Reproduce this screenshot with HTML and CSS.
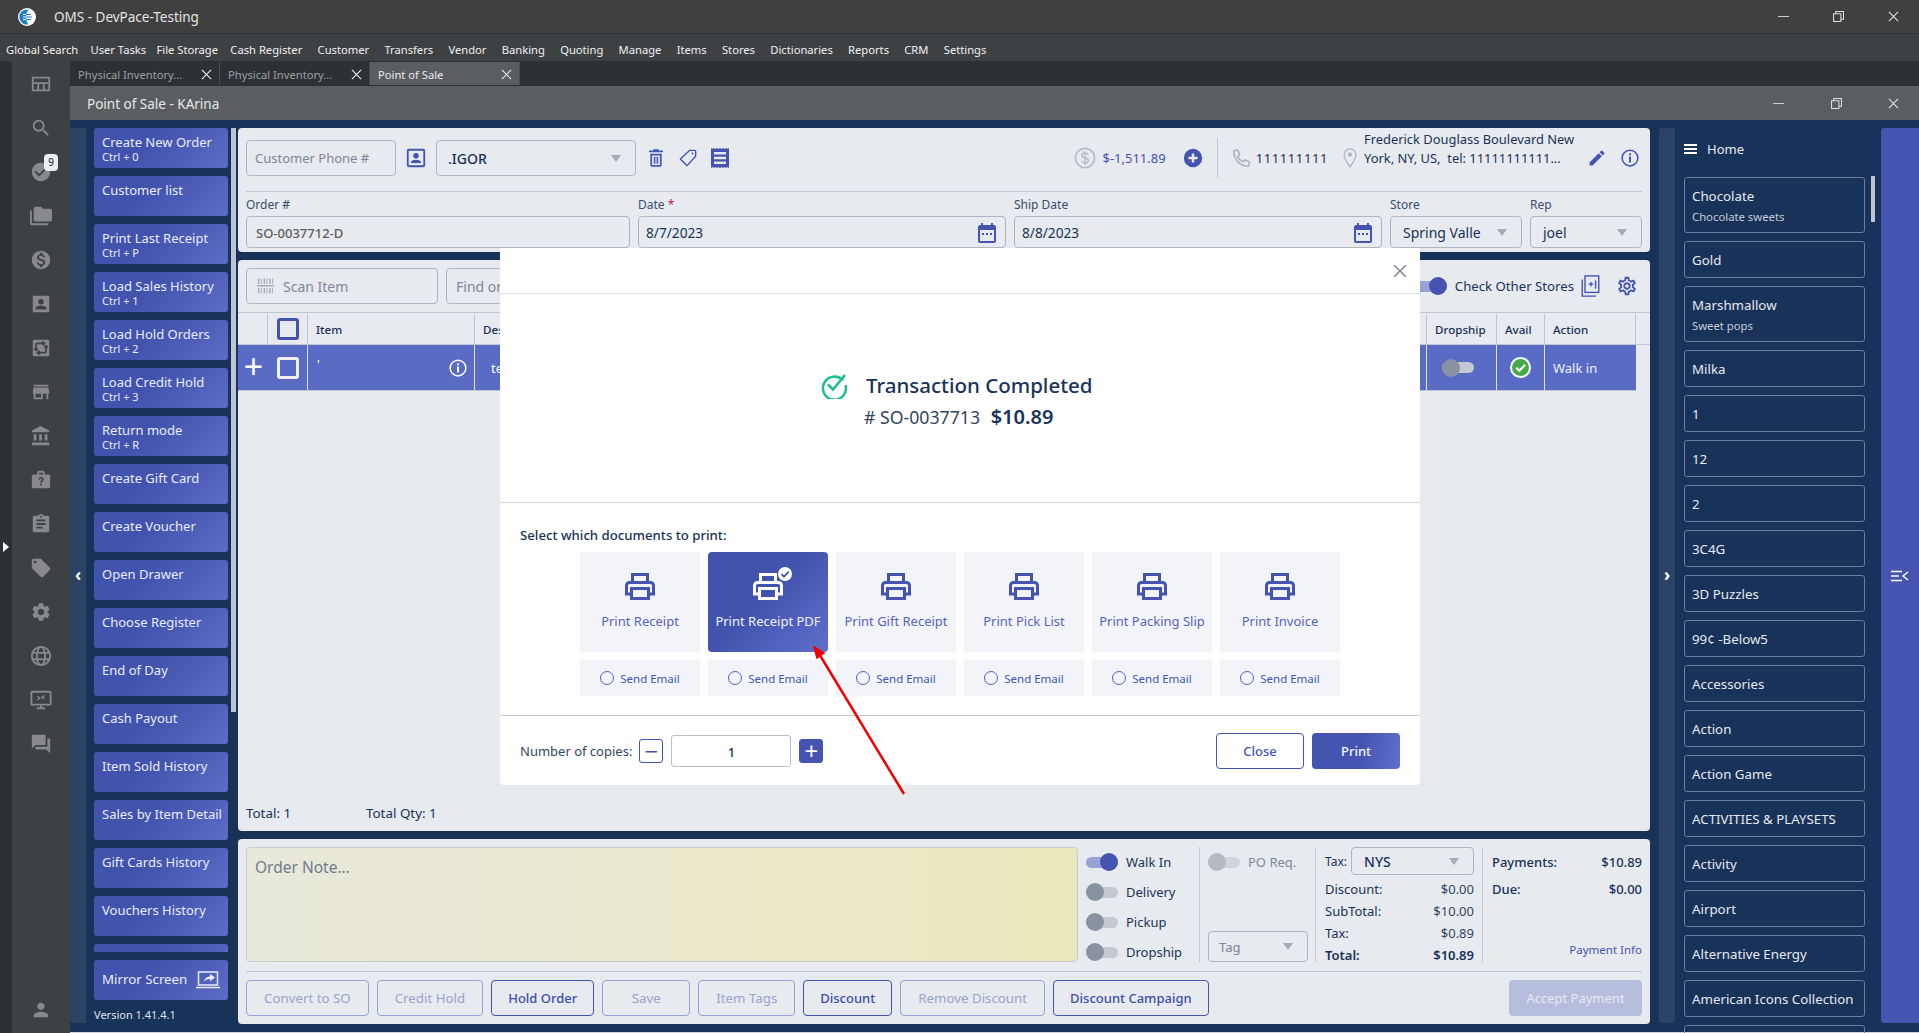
FILE: index.html
```html
<!DOCTYPE html>
<html lang="en">
<head>
<meta charset="utf-8">
<title>OMS - DevPace-Testing</title>
<link rel="stylesheet" href="styles.css">
</head>
<body>
<svg class="sprite" xmlns="http://www.w3.org/2000/svg">
  <symbol id="i-quilt" viewBox="0 0 24 24"><path fill="none" stroke="currentColor" stroke-width="2" d="M3 5h18v14H3zM3 11h18M9 11v8M15 11v8"/></symbol>
  <symbol id="i-search" viewBox="0 0 24 24"><path d="M15.5 14h-.79l-.28-.27A6.471 6.471 0 0 0 16 9.5 6.5 6.5 0 1 0 9.5 16c1.61 0 3.09-.59 4.23-1.57l.27.28v.79l5 4.99L20.49 19l-4.99-5zm-6 0C7.01 14 5 11.99 5 9.5S7.01 5 9.5 5 14 7.01 14 9.5 11.99 14 9.5 14z"/></symbol>
  <symbol id="i-check-circle" viewBox="0 0 24 24"><path d="M12 2C6.48 2 2 6.48 2 12s4.48 10 10 10 10-4.48 10-10S17.52 2 12 2zm-2 15l-5-5 1.41-1.41L10 14.17l7.59-7.59L19 8l-9 9z"/></symbol>
  <symbol id="i-folders" viewBox="0 0 24 24"><path d="M2 6H0v14c0 1.1.9 2 2 2h18v-2H2V6zm20-2h-8l-2-2H6c-1.1 0-1.99.9-1.99 2L4 16c0 1.1.9 2 2 2h16c1.1 0 2-.9 2-2V6c0-1.1-.9-2-2-2z"/></symbol>
  <symbol id="i-dollar" viewBox="0 0 24 24"><path d="M12 2C6.48 2 2 6.48 2 12s4.48 10 10 10 10-4.48 10-10S17.52 2 12 2zm1.41 16.09V20h-2.67v-1.93c-1.71-.36-3.16-1.46-3.27-3.4h1.96c.1 1.05.82 1.87 2.65 1.87 1.96 0 2.4-.98 2.4-1.59 0-.83-.44-1.61-2.67-2.14-2.48-.6-4.18-1.62-4.18-3.67 0-1.72 1.39-2.84 3.11-3.21V4h2.67v1.95c1.86.45 2.79 1.86 2.85 3.39H14.3c-.05-1.11-.64-1.87-2.22-1.87-1.5 0-2.4.68-2.4 1.64 0 .84.65 1.39 2.67 1.91s4.18 1.39 4.18 3.91c-.01 1.83-1.38 2.83-3.12 3.16z"/></symbol>
  <symbol id="i-portrait" viewBox="0 0 24 24"><path fill-rule="evenodd" d="M4 3h16a1 1 0 0 1 1 1v16a1 1 0 0 1-1 1H4a1 1 0 0 1-1-1V4a1 1 0 0 1 1-1zm8 3.500a3 3 0 1 0 0 6 3 3 0 0 0 0-6zM6 18h12v-1.300c0-2-4-3-6-3s-6 1-6 3z"/></symbol>
  <symbol id="i-portrait-line" viewBox="0 0 24 24"><path fill-rule="evenodd" d="M4 2h16a2 2 0 0 1 2 2v16a2 2 0 0 1-2 2H4a2 2 0 0 1-2-2V4a2 2 0 0 1 2-2zm0 2v16h16V4zm8 2.500a3 3 0 1 1 0 6 3 3 0 0 1 0-6zM6.500 17.500v-.8c0-1.800 3.500-2.700 5.500-2.700s5.500.9 5.500 2.700v.8z"/></symbol>
  <symbol id="i-swap" viewBox="0 0 24 24"><rect x="3" y="3" width="18" height="18" rx="1.500"/><g fill="none" stroke="#3e4144" stroke-width="1.800"><path d="M6.500 13V8.500a1.500 1.500 0 0 1 1.500-1.500h7"/><path d="M17.500 11v4.500a1.500 1.500 0 0 1-1.500 1.500H9"/><path d="M13.500 4.800l2.500 2.200-2.500 2.200M10.500 14.800L8 17l2.500 2.200M4.500 12.500l2 2 2-2M15.500 11.500l2-2 2 2"/></g></symbol>
  <symbol id="i-store" viewBox="0 0 24 24"><path d="M20 4H4v2h16V4zm1 10v-2l-1-5H4l-1 5v2h1v6h10v-6h4v6h2v-6h1zm-9 4H6v-4h6v4z"/></symbol>
  <symbol id="i-bank" viewBox="0 0 24 24"><path d="M4 10v7h3v-7H4zm6 0v7h3v-7h-3zM2 22h19v-3H2v3zm14-12v7h3v-7h-3zm-4.500-9L2 6v2h19V6l-9.500-5z"/></symbol>
  <symbol id="i-case" viewBox="0 0 24 24"><path fill-rule="evenodd" d="M4 6h4V4a2 2 0 0 1 2-2h4a2 2 0 0 1 2 2v2h4a2 2 0 0 1 2 2v11a2 2 0 0 1-2 2H4a2 2 0 0 1-2-2V8a2 2 0 0 1 2-2zm6-2v2h4V4zm1 14h2v-2h-2zm1-9c-2 0-3 1.200-3 2.500h2c0-.6.400-1 1-1s1 .4 1 1c0 1.200-2 1-2 3.500h2c0-1.800 2-2 2-3.500C15 10.200 14 9 12 9z"/></symbol>
  <symbol id="i-clipboard" viewBox="0 0 24 24"><path d="M19 3h-4.180C14.400 1.840 13.300 1 12 1c-1.300 0-2.400.84-2.820 2H5c-1.100 0-2 .9-2 2v14c0 1.100.9 2 2 2h14c1.100 0 2-.9 2-2V5c0-1.100-.9-2-2-2zm-7 0c.55 0 1 .45 1 1s-.45 1-1 1-1-.45-1-1 .45-1 1-1zm2 14H7v-2h7v2zm3-4H7v-2h10v2zm0-4H7V7h10v2z"/></symbol>
  <symbol id="i-tag" viewBox="0 0 24 24"><path d="M21.410 11.580l-9-9C12.050 2.220 11.550 2 11 2H4c-1.100 0-2 .9-2 2v7c0 .55.22 1.050.59 1.420l9 9c.36.36.86.58 1.410.58.55 0 1.050-.22 1.410-.59l7-7c.37-.36.59-.86.59-1.410 0-.55-.23-1.060-.59-1.420zM5.500 7C4.670 7 4 6.330 4 5.500S4.670 4 5.500 4 7 4.670 7 5.500 6.330 7 5.500 7z"/></symbol>
  <symbol id="i-gear" viewBox="0 0 24 24"><path d="M19.140 12.940c.04-.3.06-.61.06-.94 0-.32-.02-.64-.07-.94l2.030-1.580a.49.49 0 0 0 .12-.61l-1.920-3.320a.488.488 0 0 0-.59-.22l-2.390.96c-.5-.38-1.030-.7-1.620-.94l-.36-2.540a.484.484 0 0 0-.48-.41h-3.840c-.24 0-.43.17-.47.41l-.36 2.540c-.59.24-1.130.57-1.620.94l-2.390-.96c-.22-.08-.47 0-.59.22L2.740 8.870c-.12.21-.08.47.12.61l2.030 1.580c-.05.3-.09.63-.09.94s.02.64.07.94l-2.030 1.580a.49.49 0 0 0-.12.61l1.920 3.320c.12.22.37.29.59.22l2.390-.96c.5.38 1.030.7 1.620.94l.36 2.540c.05.24.24.41.48.41h3.840c.24 0 .44-.17.47-.41l.36-2.540c.59-.24 1.130-.56 1.620-.94l2.390.96c.22.08.47 0 .59-.22l1.920-3.320c.12-.22.07-.47-.12-.61l-2.010-1.580zM12 15.600c-1.980 0-3.600-1.620-3.600-3.600s1.620-3.600 3.600-3.600 3.600 1.620 3.600 3.600-1.620 3.600-3.600 3.600z"/></symbol>
  <symbol id="i-gear-line" viewBox="0 0 24 24"><path d="M19.430 12.980c.04-.32.07-.64.07-.98 0-.34-.03-.66-.07-.98l2.110-1.650c.19-.15.24-.42.12-.64l-2-3.460a.5.5 0 0 0-.61-.22l-2.490 1c-.52-.4-1.080-.73-1.690-.98l-.38-2.650A.488.488 0 0 0 14 2h-4c-.25 0-.46.18-.49.42l-.38 2.650c-.61.25-1.170.59-1.690.98l-2.490-1a.566.566 0 0 0-.18-.03c-.17 0-.34.09-.43.25l-2 3.460c-.13.22-.07.49.12.64l2.110 1.650c-.04.32-.07.65-.07.98 0 .33.03.66.07.98l-2.110 1.650c-.19.15-.24.42-.12.64l2 3.460a.5.5 0 0 0 .61.22l2.490-1c.52.4 1.080.73 1.690.98l.38 2.650c.03.24.24.42.49.42h4c.25 0 .46-.18.49-.42l.38-2.650c.61-.25 1.170-.59 1.690-.98l2.490 1c.06.02.12.03.18.03.17 0 .34-.09.43-.25l2-3.460c.12-.22.07-.49-.12-.64l-2.110-1.650zm-1.980-1.710c.04.31.05.52.05.73 0 .21-.02.43-.05.73l-.14 1.130.89.7 1.080.84-.7 1.210-1.270-.51-1.040-.42-.9.68c-.43.32-.84.56-1.250.73l-1.060.43-.16 1.130-.2 1.350h-1.400l-.19-1.350-.16-1.130-1.060-.43c-.43-.18-.83-.41-1.230-.71l-.91-.7-1.060.43-1.270.51-.7-1.210 1.080-.84.89-.7-.14-1.130c-.03-.31-.05-.54-.05-.74s.02-.43.05-.73l.14-1.130-.89-.7-1.080-.84.7-1.210 1.270.51 1.040.42.9-.68c.43-.32.84-.56 1.250-.73l1.060-.43.16-1.130.2-1.350h1.390l.19 1.350.16 1.130 1.060.43c.43.18.83.41 1.230.71l.91.7 1.060-.43 1.270-.51.7 1.210-1.070.85-.89.7.14 1.130zM12 8c-2.210 0-4 1.790-4 4s1.790 4 4 4 4-1.790 4-4-1.790-4-4-4zm0 6c-1.100 0-2-.9-2-2s.9-2 2-2 2 .9 2 2-.9 2-2 2z"/></symbol>
  <symbol id="i-globe" viewBox="0 0 24 24"><g fill="none" stroke="currentColor" stroke-width="2"><circle cx="12" cy="12" r="10"/><ellipse cx="12" cy="12" rx="4.500" ry="10"/><path d="M3 8.500h18M3 15.500h18"/></g></symbol>
  <symbol id="i-monitor" viewBox="0 0 24 24"><g fill="none" stroke="currentColor" stroke-width="2"><rect x="1.500" y="3" width="21" height="14" rx="1"/><path d="M12 17v4M7.500 21h9"/><path stroke-width="1.300" d="M8 8l3 2-3 2M16 7l-3 2 3 2"/></g></symbol>
  <symbol id="i-forum" viewBox="0 0 24 24"><path d="M21 6h-2v9H6v2c0 .55.45 1 1 1h11l4 4V7c0-.55-.45-1-1-1zm-4 6V3c0-.55-.45-1-1-1H3c-.55 0-1 .45-1 1v14l4-4h10c.55 0 1-.45 1-1z"/></symbol>
  <symbol id="i-person" viewBox="0 0 24 24"><path d="M12 12c2.210 0 4-1.790 4-4s-1.790-4-4-4-4 1.790-4 4 1.790 4 4 4zm0 2c-2.670 0-8 1.340-8 4v2h16v-2c0-2.660-5.330-4-8-4z"/></symbol>
  <symbol id="i-trash" viewBox="0 0 16 20"><path fill-rule="evenodd" d="M5 0h6v1.500h5V3.500H0V1.500h5zM1.500 5h13v13a2 2 0 0 1-2 2h-9a2 2 0 0 1-2-2zm2 2v11h9V7zm2 1.500h1.800v8H5.500zm3.200 0h1.800v8H8.700z"/></symbol>
  <symbol id="i-tag-line" viewBox="0 0 20 20"><path fill="none" stroke="currentColor" stroke-width="1.500" stroke-linejoin="round" d="M12 1.500h5.500a1 1 0 0 1 1 1V8L9 18.500 1.500 11z"/><circle cx="15" cy="5" r="1"/></symbol>
  <symbol id="i-receipt" viewBox="0 0 18 20"><path fill-rule="evenodd" d="M0 0l1.500 1L3 0l1.500 1L6 0l1.500 1L9 0l1.500 1L12 0l1.500 1L15 0l1.500 1L18 0v20l-1.500-1-1.500 1-1.500-1-1.500 1-1.500-1L9 20l-1.500-1L6 20l-1.500-1L3 20l-1.500-1L0 20zM3 4v2.500h12V4zm0 4.700v2.500h12V8.700zm0 4.700v2.500h12v-2.500z"/></symbol>
  <symbol id="i-calendar" viewBox="0 0 18 20"><path fill-rule="evenodd" d="M3 0h2v2h8V0h2v2h1a2 2 0 0 1 2 2v14a2 2 0 0 1-2 2H2a2 2 0 0 1-2-2V4a2 2 0 0 1 2-2h1zM2 7v11h14V7zm2 3h2v2H4zm4 0h2v2H8zm4 0h2v2h-2z"/></symbol>
  <symbol id="i-phone" viewBox="0 0 20 20"><path fill="none" stroke="currentColor" stroke-width="1.800" stroke-linejoin="round" d="M2 2l4-1 2 5-2 2c1 2.500 3 4.500 5.500 5.500l2-2 5 2-1 4.500C9 18.500 1.500 11 2 2z"/></symbol>
  <symbol id="i-pin" viewBox="0 0 16 24"><path fill="none" stroke="currentColor" stroke-width="1.500" d="M8 23C5 18 1 13.500 1 8a7 7 0 0 1 14 0c0 5.500-4 10-7 15z"/><circle cx="8" cy="8" r="2.500"/></symbol>
  <symbol id="i-pencil" viewBox="0 0 24 24"><path d="M3 17.250V21h3.750L17.810 9.940l-3.750-3.750L3 17.250zM20.710 7.040c.39-.39.39-1.020 0-1.410l-2.340-2.340a.996.996 0 0 0-1.410 0l-1.830 1.830 3.750 3.750 1.830-1.830z"/></symbol>
  <symbol id="i-info" viewBox="0 0 24 24"><circle cx="12" cy="12" r="10.500" fill="none" stroke="currentColor" stroke-width="2"/><circle cx="12" cy="7" r="1.500"/><path d="M10.700 10h2.600v8h-2.600z"/></symbol>
  <symbol id="i-plus-circle" viewBox="0 0 24 24"><path fill-rule="evenodd" d="M12 1a11 11 0 1 1 0 22 11 11 0 0 1 0-22zm-1.500 5.500v4h-4v3h4v4h3v-4h4v-3h-4v-4z"/></symbol>
  <symbol id="i-dollar-line" viewBox="0 0 24 24"><circle cx="12" cy="12" r="10.500" fill="none" stroke="currentColor" stroke-width="1.800"/><path fill="none" stroke="currentColor" stroke-width="1.500" d="M15.500 8.500C15 7 13.500 6.500 12 6.500c-2 0-3.500 1-3.500 2.700 0 3.800 7.200 1.800 7.200 5.600 0 1.700-1.700 2.700-3.700 2.700-1.700 0-3.300-.7-3.800-2.200M12 4.500v15"/></symbol>
  <symbol id="i-barcode" viewBox="0 0 18 16"><path d="M0 7h18v1.500H0z M1 0h1.500v6H1zM4 0h1v6H4zM7 0h1.500v6H7zM10 0h1v6h-1zM13 0h1.500v6H13zM16 0h1v6h-1zM1 10h1.500v6H1zM4 10h1v6H4zM7 10h1.500v6H7zM10 10h1v6h-1zM13 10h1.500v6H13zM16 10h1v6h-1z"/></symbol>
  <symbol id="i-plus-copy" viewBox="0 0 20 24"><g fill="none" stroke="currentColor" stroke-width="1.500"><path d="M1 5v18h15"/><rect x="4" y="1" width="15" height="18"/><path d="M8 10h5M10.500 7.500v5M15.500 6v9"/></g></symbol>
  <symbol id="i-printer" viewBox="0 0 30 27"><g fill="none" stroke="currentColor" stroke-width="3"><path d="M7.500 10V1.500h15V10"/><path d="M6 21H1.500v-8.500a3 3 0 0 1 3-3h21a3 3 0 0 1 3 3V21H24"/><rect x="6.500" y="15.500" width="17" height="10"/></g></symbol>
  <symbol id="i-mirror" viewBox="0 0 24 18"><g fill="none" stroke="currentColor" stroke-width="1.500"><rect x="2.500" y="1" width="19" height="13"/><path d="M0 16.500h24"/></g><path d="M14 2.800l5 3.700-5 3.700V8c-3 0-5 1-6 3 .3-3 2.500-5.300 6-5.500z"/></symbol>
  <symbol id="i-check-mark" viewBox="0 0 14 14"><path fill="none" stroke="currentColor" stroke-width="1.800" d="M3.500 7.200l2.500 2.500 4.800-5"/></symbol>
  <symbol id="i-restore" viewBox="0 0 12 12"><path fill="none" stroke="currentColor" stroke-width="1.100" d="M.6 3h8v8.400h-8zM3 3V.6h8.400v8.400H8.600"/></symbol>
  <symbol id="i-x" viewBox="0 0 12 12"><path fill="none" stroke="currentColor" stroke-width="1.200" d="M1 1l10 10M11 1L1 11"/></symbol>
  <symbol id="i-sidebar-right" viewBox="0 0 18 12"><path fill="none" stroke="currentColor" stroke-width="1.500" d="M0 1.500h11M0 6h8M0 10.500h11M17 2l-5 4 5 4"/></symbol>
</svg>

<div class="app">
  <header class="titlebar">
    <svg class="logo" viewBox="0 0 18 18"><circle cx="9" cy="9" r="9" fill="#fff"/><path d="M10.500 1.700a7.500 7.500 0 1 0 0 14.600c-1.600-2-2.400-4.500-2.400-7.300s.8-5.300 2.400-7.300z" fill="#1f7fc4"/><path d="M5 6.500h7M5 9h6M5 11.500h7" stroke="#fff" stroke-width="1"/><path d="M8 6.500h5M8 9h6M8 11.500h5" stroke="#1f7fc4" stroke-width="1"/></svg>
    <span class="titlebar-text">OMS - DevPace-Testing</span>
    <div class="winctl">
      <span class="winctl-min"></span>
      <svg class="winctl-icon"><use href="#i-restore"/></svg>
      <svg class="winctl-icon"><use href="#i-x"/></svg>
    </div>
  </header>
  <nav class="menubar">
    <span class="tight">Global Search</span><span class="tighter">User Tasks</span><span class="tight">File Storage</span><span>Cash Register</span><span>Customer</span><span>Transfers</span><span>Vendor</span><span>Banking</span><span>Quoting</span><span>Manage</span><span>Items</span><span>Stores</span><span>Dictionaries</span><span>Reports</span><span>CRM</span><span>Settings</span>
  </nav>
  <div class="shell">
    <div class="edge"><span class="edge-arrow"></span></div>
    <aside class="rail">
      <div class="rail-list">
        <svg class="rail-icon"><use href="#i-quilt"/></svg>
        <svg class="rail-icon"><use href="#i-search"/></svg>
        <span class="rail-badged"><svg class="rail-icon"><use href="#i-check-circle"/></svg><b class="badge">9</b></span>
        <svg class="rail-icon"><use href="#i-folders"/></svg>
        <svg class="rail-icon"><use href="#i-dollar"/></svg>
        <svg class="rail-icon"><use href="#i-portrait"/></svg>
        <svg class="rail-icon"><use href="#i-swap"/></svg>
        <svg class="rail-icon"><use href="#i-store"/></svg>
        <svg class="rail-icon"><use href="#i-bank"/></svg>
        <svg class="rail-icon"><use href="#i-case"/></svg>
        <svg class="rail-icon"><use href="#i-clipboard"/></svg>
        <svg class="rail-icon"><use href="#i-tag"/></svg>
        <svg class="rail-icon"><use href="#i-gear"/></svg>
        <svg class="rail-icon"><use href="#i-globe"/></svg>
        <svg class="rail-icon"><use href="#i-monitor"/></svg>
        <svg class="rail-icon"><use href="#i-forum"/></svg>
      </div>
      <svg class="rail-icon rail-user"><use href="#i-person"/></svg>
    </aside>
    <div class="workspace">
      <div class="tabs">
        <div class="tab"><span>Physical Inventory...</span><svg class="tab-x"><use href="#i-x"/></svg></div>
        <div class="tab"><span>Physical Inventory...</span><svg class="tab-x"><use href="#i-x"/></svg></div>
        <div class="tab tab-active"><span>Point of Sale</span><svg class="tab-x"><use href="#i-x"/></svg></div>
      </div>
      <div class="winbar">
        <span>Point of Sale - KArina</span>
        <div class="winctl winctl-inner">
          <span class="winctl-min"></span>
          <svg class="winctl-icon"><use href="#i-restore"/></svg>
          <svg class="winctl-icon"><use href="#i-x"/></svg>
        </div>
      </div>
      <main class="content">
        <div class="strip"><span class="chev">‹</span></div>
        <div class="actions">
          <div class="actions-scroll">
            <button class="act">Create New Order<small>Ctrl + 0</small></button>
            <button class="act">Customer list</button>
            <button class="act">Print Last Receipt<small>Ctrl + P</small></button>
            <button class="act">Load Sales History<small>Ctrl + 1</small></button>
            <button class="act">Load Hold Orders<small>Ctrl + 2</small></button>
            <button class="act">Load Credit Hold<small>Ctrl + 3</small></button>
            <button class="act">Return mode<small>Ctrl + R</small></button>
            <button class="act">Create Gift Card</button>
            <button class="act">Create Voucher</button>
            <button class="act">Open Drawer</button>
            <button class="act">Choose Register</button>
            <button class="act">End of Day</button>
            <button class="act">Cash Payout</button>
            <button class="act">Item Sold History</button>
            <button class="act">Sales by Item Detail</button>
            <button class="act">Gift Cards History</button>
            <button class="act">Vouchers History</button>
            <button class="act"></button>
          </div>
          <button class="act act-mirror">Mirror Screen<svg class="mirror-icon"><use href="#i-mirror"/></svg></button>
          <div class="version">Version 1.41.4.1</div>
        </div>
        <div class="thumb-col"><div class="thumb"></div></div>

        <div class="center">
          <section class="panel panel-order">
            <div class="order-top">
              <div class="field phone-field ph">Customer Phone #</div>
              <svg class="ic ic-contact"><use href="#i-portrait-line"/></svg>
              <div class="field select customer-select"><span class="strong">.IGOR</span><i class="caret"></i></div>
              <svg class="ic ic-trash"><use href="#i-trash"/></svg>
              <svg class="ic ic-tag"><use href="#i-tag-line"/></svg>
              <svg class="ic ic-receipt"><use href="#i-receipt"/></svg>
              <div class="spacer"></div>
              <svg class="ic ic-dollar"><use href="#i-dollar-line"/></svg>
              <span class="balance">$-1,511.89</span>
              <svg class="ic ic-plus"><use href="#i-plus-circle"/></svg>
              <span class="vline"></span>
              <svg class="ic ic-phone"><use href="#i-phone"/></svg>
              <span class="phone-no">111111111</span>
              <svg class="ic ic-pin"><use href="#i-pin"/></svg>
              <span class="address">Frederick Douglass Boulevard New<br>York, NY, US,&nbsp; tel: 11111111111...</span>
              <svg class="ic ic-pencil"><use href="#i-pencil"/></svg>
              <svg class="ic ic-info"><use href="#i-info"/></svg>
            </div>
            <div class="order-fields">
              <label class="fg fg-order">Order #<div class="field value-grey">SO-0037712-D</div></label>
              <label class="fg fg-date">
                <span>Date <em class="req">*</em></span>
                <div class="field"><span>8/7/2023</span><svg class="ic ic-cal"><use href="#i-calendar"/></svg></div>
              </label>
              <label class="fg fg-date">Ship Date<div class="field"><span>8/8/2023</span><svg class="ic ic-cal"><use href="#i-calendar"/></svg></div></label>
              <label class="fg fg-store">Store<div class="field select"><span>Spring Valle</span><i class="caret"></i></div></label>
              <label class="fg fg-rep">Rep<div class="field select"><span>joel</span><i class="caret"></i></div></label>
            </div>
          </section>

          <section class="panel panel-items">
            <div class="items-bar">
              <div class="field scan-field ph"><svg class="ic ic-barcode"><use href="#i-barcode"/></svg>Scan Item</div>
              <div class="field find-field ph">Find or add item</div>
              <div class="spacer"></div>
              <span class="toggle toggle-on"></span>
              <span class="other-stores">Check Other Stores</span>
              <svg class="ic ic-copy"><use href="#i-plus-copy"/></svg>
              <svg class="ic ic-cog"><use href="#i-gear-line"/></svg>
            </div>
            <div class="grid grid-head">
              <div></div>
              <div class="cell-center"><span class="check"></span></div>
              <div>Item</div>
              <div>Description</div>
              <div>Dropship</div>
              <div>Avail</div>
              <div>Action</div>
              <div></div>
            </div>
            <div class="grid grid-row">
              <div class="cell-plus">+</div>
              <div class="cell-center"><span class="check check-white"></span></div>
              <div class="cell-item"><span class="tick">'</span><svg class="ic ic-info-white"><use href="#i-info"/></svg></div>
              <div class="cell-desc">test</div>
              <div class="cell-center"><span class="toggle toggle-off toggle-row"></span></div>
              <div class="cell-center"><span class="avail"><svg viewBox="0 0 14 14"><use href="#i-check-mark"/></svg></span></div>
              <div class="cell-action">Walk in</div>
            </div>
            <div class="spacer"></div>
            <div class="items-total"><span class="total-a">Total: 1</span><span>Total Qty: 1</span></div>
          </section>

          <section class="panel panel-bottom">
            <div class="bottom-top">
              <div class="note">Order Note...</div>
              <div class="col-modes">
                <div class="mode"><span class="toggle toggle-on"></span>Walk In</div>
                <div class="mode"><span class="toggle toggle-off"></span>Delivery</div>
                <div class="mode"><span class="toggle toggle-off"></span>Pickup</div>
                <div class="mode"><span class="toggle toggle-off"></span>Dropship</div>
              </div>
              <div class="col-po">
                <div class="mode mode-muted"><span class="toggle toggle-muted"></span>PO Req.</div>
                <div class="field select tag-select ph"><span>Tag</span><i class="caret"></i></div>
              </div>
              <div class="col-totals">
                <div class="tax-row"><span class="tax-label">Tax:</span><div class="field select tax-select"><span class="strong">NYS</span><i class="caret"></i></div></div>
                <div class="line"><span>Discount:</span><span>$0.00</span></div>
                <div class="line"><span>SubTotal:</span><span>$10.00</span></div>
                <div class="line"><span>Tax:</span><span>$0.89</span></div>
                <div class="line line-strong"><span>Total:</span><span>$10.89</span></div>
              </div>
              <div class="col-pay">
                <div class="pay-line"><span>Payments:</span><span>$10.89</span></div>
                <div class="pay-line"><span>Due:</span><span>$0.00</span></div>
                <div class="spacer"></div>
                <div class="pay-info">Payment Info</div>
              </div>
            </div>
            <div class="bottom-actions">
              <button class="btn btn-off">Convert to SO</button>
              <button class="btn btn-off">Credit Hold</button>
              <button class="btn">Hold Order</button>
              <button class="btn btn-off btn-save">Save</button>
              <button class="btn btn-off">Item Tags</button>
              <button class="btn">Discount</button>
              <button class="btn btn-off">Remove Discount</button>
              <button class="btn">Discount Campaign</button>
              <div class="spacer"></div>
              <button class="btn btn-accept">Accept Payment</button>
            </div>
          </section>
        </div>

        <div class="strip strip-right"><span class="chev">›</span></div>

        <aside class="cats">
          <div class="cats-home"><span class="burger"></span>Home</div>
          <div class="cats-list">
            <div class="cat cat-big">Chocolate<small>Chocolate sweets</small></div>
            <div class="cat">Gold</div>
            <div class="cat cat-big">Marshmallow<small>Sweet pops</small></div>
            <div class="cat">Milka</div>
            <div class="cat">1</div>
            <div class="cat">12</div>
            <div class="cat">2</div>
            <div class="cat">3C4G</div>
            <div class="cat">3D Puzzles</div>
            <div class="cat">99¢ -Below5</div>
            <div class="cat">Accessories</div>
            <div class="cat">Action</div>
            <div class="cat">Action Game</div>
            <div class="cat">ACTIVITIES &amp; PLAYSETS</div>
            <div class="cat">Activity</div>
            <div class="cat">Airport</div>
            <div class="cat">Alternative Energy</div>
            <div class="cat">American Icons Collection</div>
            <div class="cat"></div>
          </div>
        </aside>
        <div class="cats-thumb"></div>
        <div class="cart-tab"><svg class="cart-icon"><use href="#i-sidebar-right"/></svg></div>
      </main>
    </div>
  </div>
</div>

<div class="modal">
  <div class="modal-head"><svg class="modal-x"><use href="#i-x"/></svg></div>
  <div class="modal-hero">
    <svg class="hero-check" viewBox="0 0 28 28"><path d="M23 9.500A11.500 11.500 0 1 0 25.500 14" fill="none" stroke="#1fc08e" stroke-width="2.600"/><path d="M8 13.500l5 5L25 4" fill="none" stroke="#1fc08e" stroke-width="2.600"/></svg>
    <div class="hero-text">
      <h1>Transaction Completed</h1>
      <p># SO-0037713 <b>$10.89</b></p>
    </div>
  </div>
  <div class="modal-docs">
    <div class="docs-title">Select which documents to print:</div>
    <div class="docs-grid">
      <div class="doc"><svg class="printer"><use href="#i-printer"/></svg>Print Receipt</div>
      <div class="doc doc-on"><span class="printer-wrap"><svg class="printer"><use href="#i-printer"/></svg><span class="doc-check"><svg viewBox="0 0 14 14"><use href="#i-check-mark"/></svg></span></span>Print Receipt PDF</div>
      <div class="doc"><svg class="printer"><use href="#i-printer"/></svg>Print Gift Receipt</div>
      <div class="doc"><svg class="printer"><use href="#i-printer"/></svg>Print Pick List</div>
      <div class="doc"><svg class="printer"><use href="#i-printer"/></svg>Print Packing Slip</div>
      <div class="doc"><svg class="printer"><use href="#i-printer"/></svg>Print Invoice</div>
      <div class="email"><i class="radio"></i>Send Email</div>
      <div class="email"><i class="radio"></i>Send Email</div>
      <div class="email"><i class="radio"></i>Send Email</div>
      <div class="email"><i class="radio"></i>Send Email</div>
      <div class="email"><i class="radio"></i>Send Email</div>
      <div class="email"><i class="radio"></i>Send Email</div>
    </div>
  </div>
  <div class="modal-foot">
    <span class="copies-label">Number of copies:</span>
    <button class="step">−</button>
    <div class="copies">1</div>
    <button class="step step-plus">+</button>
    <div class="spacer"></div>
    <button class="foot-btn">Close</button>
    <button class="foot-btn foot-print">Print</button>
  </div>
</div>

<svg class="annotation" viewBox="0 0 1919 1033"><path d="M904 794L818 652" stroke="#f50000" stroke-width="2.500" fill="none"/><path d="M814 647l10 6-7 5z" fill="#f50000" stroke="#f50000" stroke-width="1.500"/></svg>
</body>
</html>
```

FILE: styles.css
```css
* { box-sizing: border-box; }
html, body { margin: 0; height: 1033px; width: 1919px; overflow: hidden; }
body { font-family: "Noto Sans", "Open Sans", sans-serif; font-size: 13px; color: #19325a; background: #19325a; position: relative; }
button { font-family: inherit; }
.sprite { position: absolute; width: 0; height: 0; }
.spacer { flex: 1 1 0; }
.app { display: flex; flex-direction: column; height: 1033px; }

.titlebar { height: 34px; background: #404040; border-bottom: 1px solid #333; display: flex; align-items: center; padding-left: 18px; color: #e4e4e4; flex: none; }
.logo { width: 18px; height: 18px; }
.titlebar-text { margin-left: 18px; font-size: 13.500px; padding-top: 1px; }
.winctl { margin-left: auto; display: flex; align-items: center; padding-right: 20px; color: #e2e2e2; }
.winctl-min { width: 11px; height: 1.500px; background: #cfcfcf; margin-right: 44px; }
.winctl-icon { width: 11px; height: 11px; margin-left: 0; }
.winctl-icon + .winctl-icon { margin-left: 44px; }
.winctl-inner { padding-right: 20px; padding-top: 0; }

.menubar { height: 27px; background: #3e4144; display: flex; align-items: center; padding: 4px 0 0 6px; color: #f0f0f0; font-size: 11.200px; flex: none; gap: 15.300px; }
.menubar .tight { margin-right: -3px; }
.menubar .tighter { margin-right: -5px; }

.shell { flex: 1; display: flex; min-height: 0; }
.edge { width: 12px; background: #2d3134; display: flex; align-items: flex-start; padding-top: 480px; padding-left: 3px; }
.edge-arrow { width: 0; height: 0; border-left: 6px solid #fff; border-top: 5px solid transparent; border-bottom: 5px solid transparent; margin-top: 1px; }
.rail { width: 58px; background: #3e4144; color: #87898c; display: flex; flex-direction: column; align-items: center; padding-top: 12px; padding-bottom: 12px; }
.rail-list { display: flex; flex-direction: column; align-items: center; gap: 22px; }
.rail-icon { width: 22px; height: 22px; fill: currentColor; display: block; }
.rail-badged { position: relative; display: block; height: 22px; }
.badge { position: absolute; left: 14px; top: -7px; min-width: 14px; height: 17px; background: #eceff1; color: #333; border-radius: 4px; font-size: 10px; font-weight: 500; text-align: center; line-height: 17px; }
.rail-user { margin-top: auto; }

.workspace { flex: 1; min-width: 0; display: flex; flex-direction: column; }
.tabs { height: 25px; background: #2d3134; display: flex; padding-top: 1px; flex: none; }
.tab { width: 150px; height: 23px; border-right: 1px solid #4a4d50; display: flex; align-items: center; justify-content: space-between; padding: 1px 7px 0 8px; color: #9ca0a3; font-size: 11.200px; }
.tab-active { background: #5a5e61; color: #e9e9e9; }
.tab-x { width: 11px; height: 11px; color: #eee; }
.winbar { height: 34px; background: #5a5e61; display: flex; align-items: center; padding: 1px 0 0 17px; color: #e8e8e8; font-size: 13.500px; flex: none; }
.winbar .winctl-min { margin-right: 47px; }
.winbar .winctl-icon + .winctl-icon { margin-left: 46px; }

.content { flex: 1; min-height: 0; background: #19325a; display: flex; padding-top: 8px; border-bottom: 1px solid #cfd3d9; }
.strip { width: 16px; background: #2c4366; margin-bottom: 9px; border-radius: 3px 0 0 3px; display: flex; align-items: center; justify-content: center; color: #fff; flex: none; }
.chev { font-size: 17px; font-weight: 700; line-height: 1; padding-bottom: 2px; }

.actions { width: 134px; margin-left: 8px; display: flex; flex-direction: column; flex: none; }
.actions-scroll { height: 823.500px; overflow: hidden; display: flex; flex-direction: column; gap: 8px; flex: none; }
.act { height: 40px; flex: none; width: 100%; border: 0; border-radius: 3px; background: linear-gradient(135deg, #4253ae 40%, #5c6cc7 100%); color: #e9ecf6; font-size: 13px; line-height: 15px; padding: 7px 8px 0; display: flex; flex-direction: column; align-items: flex-start; justify-content: flex-start; white-space: nowrap; }
.act small { display: block; font-size: 11px; line-height: 14px; }
.act-mirror { margin-top: 8px; flex-direction: row; align-items: center; justify-content: space-between; font-size: 13.300px; padding: 0 8px; }
.mirror-icon { width: 24px; height: 18px; fill: currentColor; }
.version { color: #dfe3ea; font-size: 11px; margin-top: 7px; line-height: 16px; }
.thumb-col { width: 10px; flex: none; padding-left: 3px; }
.thumb { width: 5px; height: 584px; background: #bdc5d2; }

.center { width: 1412px; flex: none; display: flex; flex-direction: column; gap: 8px; padding-bottom: 8px; }
.panel { background: #e7eaee; border-radius: 4px; display: flex; flex-direction: column; }
.panel-order { height: 124px; flex: none; padding: 0 8px; }
.order-top { height: 64px; display: flex; align-items: center; border-bottom: 1px solid #c5cad2; flex: none; padding-top: 12px; padding-bottom: 15px; }
.field { height: 36px; border: 1px solid #aeb5c1; border-radius: 4px; display: flex; align-items: center; padding: 0 7px; font-size: 13px; color: #19325a; }
.ph { color: #7c8797; font-size: 14px; }
.phone-field { width: 150px; padding-left: 8px; font-size: 13px; }
.select { justify-content: space-between; padding-right: 14px; }
.customer-select { width: 200px; margin-left: 9px; padding-left: 11px; }
.strong { font-weight: 500; font-size: 14px; }
.caret { width: 0; height: 0; border-left: 5px solid transparent; border-right: 5px solid transparent; border-top: 7px solid #a4abb6; flex: none; }
.ic { fill: #4454b0; color: #4454b0; flex: none; display: block; }
.ic-contact { width: 22px; height: 22px; margin-left: 9px; }
.ic-trash { width: 14px; height: 18px; margin-left: 13px; }
.ic-tag { width: 18px; height: 20px; margin-left: 16px; }
.ic-receipt { width: 18px; height: 20px; margin-left: 14px; }
.ic-dollar { width: 22px; height: 22px; fill: #b6bcc6; color: #b6bcc6; }
.balance { color: #4454b0; font-size: 13px; margin-left: 6px; }
.ic-plus { width: 20px; height: 20px; margin-left: 17px; }
.vline { width: 1px; height: 40px; background: #bfc5ce; margin: 0 14px 0 14px; }
.ic-phone { width: 19px; height: 19px; color: #aeb5c0; fill: none; }
.phone-no { margin-left: 5px; font-size: 13px; letter-spacing: .6px; }
.ic-pin { width: 14px; height: 20px; margin-left: 15px; color: #aeb5c0; fill: #aeb5c0; }
.address { margin: -18px 0 0 7px; width: 214px; font-size: 12.900px; line-height: 19px; white-space: nowrap; }
.ic-pencil { width: 20px; height: 20px; margin-left: 9px; }
.ic-info { width: 18px; height: 18px; margin-left: 14px; margin-right: 3px; }

.order-fields { display: flex; gap: 8px; padding-top: 3px; height: 60px; }
.fg { display: flex; flex-direction: column; font-size: 12px; color: #3a4d6e; line-height: 20px; }
.fg .field { height: 32px; margin-top: 1px; padding-top: 1px; }
.fg-order { width: 384px; }
.fg-date { width: 368px; }
.fg-store { width: 132px; }
.fg-rep { width: 112px; }
.fg .field { justify-content: space-between; font-size: 13.700px; }
.fg-store .field, .fg-rep .field { padding-left: 12px; font-size: 14px; padding-right: 14px; }
.fg .value-grey { color: #5d5d5d; font-weight: 500; padding-left: 9px; justify-content: flex-start; font-size: 13px; }
.req { color: #c2185b; font-style: normal; }
.ic-cal { width: 18px; height: 20px; margin-right: 2px; }

.panel-items { height: 571px; flex: none; }
.items-bar { height: 52px; display: flex; align-items: center; padding: 0 14px 0 8px; flex: none; }
.scan-field { width: 192px; padding-left: 10px; }
.ic-barcode { width: 17px; height: 16px; fill: #a7adb8; margin-right: 9px; }
.find-field { width: 200px; margin-left: 8px; padding-left: 9px; }
.other-stores { margin-left: 8px; font-size: 13.200px; }
.ic-copy { width: 19px; height: 22px; margin-left: 7px; }
.ic-cog { width: 22px; height: 22px; margin-left: 16px; margin-right: -2px; }
.toggle { width: 32px; height: 18px; position: relative; display: block; flex: none; }
.toggle::before { content: ""; position: absolute; left: 0; right: 0; top: 3.500px; height: 11px; border-radius: 6px; background: #c3c8d1; }
.toggle::after { content: ""; position: absolute; left: 0; top: 0; width: 18px; height: 18px; border-radius: 50%; background: #8892a0; }
.toggle-on::before { background: #98a2d6; }
.toggle-on::after { left: 14px; background: #4454b0; }
.toggle-muted::before { background: #d2d6dc; }
.toggle-muted::after { background: #b4b9c2; }
.toggle-row { margin-right: 7px; }

.grid { display: grid; grid-template-columns: 30px 40px 167px 952px 70px 48px 91px; width: 1398px; flex: none; }
.grid > div { border-right: 1px solid #c0c6cf; display: flex; align-items: center; }
.grid > div:last-child { border-right: 0; }
.grid-head { height: 33px; border-top: 1px solid #c0c6cf; border-bottom: 1px solid #c0c6cf; font-size: 11.600px; font-weight: 500; width: 1412px; grid-template-columns: 30px 40px 167px 952px 70px 48px 91px 14px; padding-top: 1px; }
.grid-head > div { padding-left: 8px; }
.grid-head > .cell-center { padding-left: 0; }
.grid-row { height: 46px; background: #5a6bc6; color: #fff; border-bottom: 1px solid #c0c6cf; }
.grid-row > div:first-child { border-right: 0; }
.grid-row > div { border-right-color: #dfe3ee; }
.cell-center { justify-content: center; }
.grid-row > .cell-plus { font-size: 34px; font-weight: 400; justify-content: center; line-height: 1; padding-bottom: 4px; padding-left: 1px; }
.cell-item { justify-content: space-between; padding: 0 7px 0 9px; }
.tick { font-size: 12px; margin-top: -6px; }
.ic-info-white { width: 18px; height: 18px; fill: #fff; color: #fff; }
.cell-desc { padding-left: 16px; }
.cell-action { padding-left: 8px; color: #eef0f8; font-size: 13px; }
.check { width: 22px; height: 22px; border: 3px solid #4454b0; border-radius: 3px; display: block; }
.check-white { border-color: #f0f1f7; }
.avail { width: 21px; height: 21px; border-radius: 50%; background: #46a949; border: 2px solid #fff; color: #fff; display: block; }
.avail svg { width: 17px; height: 17px; display: block; fill: none; }
.items-total { height: 36px; display: flex; align-items: center; padding: 0 8px; font-size: 13.400px; flex: none; }
.total-a { width: 120px; }

.panel-bottom { height: 185px; flex: none; }
.bottom-top { height: 133px; margin: 0 8px; padding: 8px 0 9px; display: flex; border-bottom: 1px solid #c2c7d0; flex: none; }
.note { width: 832px; background: linear-gradient(90deg, #e8e8dc, #ebe7bb); border: 1px solid #c9ccc8; border-radius: 4px; padding: 8px 8px; font-size: 15.500px; color: #707c8b; line-height: 22px; }
.col-modes { width: 122px; padding-left: 8px; border-right: 1px solid #c5cad2; display: flex; flex-direction: column; justify-content: space-between; padding-top: 6px; padding-bottom: 1px; flex: none; }
.mode { display: flex; align-items: center; gap: 8px; height: 18px; font-size: 13px; }
.mode-muted { color: #7e8896; margin-top: 6px; }
.col-po { width: 116px; padding: 0 8px; border-right: 1px solid #c5cad2; display: flex; flex-direction: column; justify-content: space-between; flex: none; }
.tag-select { height: 31px; width: 100px; padding-left: 10px; font-size: 13px; }
.col-totals { width: 167px; padding: 0 8px 0 9px; border-right: 1px solid #c5cad2; display: flex; flex-direction: column; flex: none; }
.tax-row { display: flex; align-items: center; gap: 4px; height: 28px; margin-bottom: 3px; flex: none; }
.tax-label { font-size: 12px; }
.tax-select { width: 125px; height: 28px; padding-left: 12px; }
.line { display: flex; justify-content: space-between; height: 22px; align-items: center; font-size: 13px; flex: none; }
.line span:last-child { color: #324663; }
.line-strong { font-weight: 600; }
.line-strong span:last-child { color: #19325a; }
.col-pay { flex: 1; padding-left: 9px; display: flex; flex-direction: column; }
.pay-line { display: flex; justify-content: space-between; font-weight: 500; font-size: 13px; height: 27px; padding-top: 5px; line-height: 20px; }
.pay-info { color: #4454b0; font-size: 11.500px; line-height: 16px; margin-bottom: 4px; text-align: right; }
.bottom-actions { display: flex; gap: 8px; padding: 8px; flex: none; }
.btn { height: 36px; background: transparent; border: 1px solid #4454b0; border-radius: 4px; color: #3e4fa9; font-size: 13px; font-weight: 500; padding: 0 16px; white-space: nowrap; }
.btn-off { border-color: #98a3d8; color: #9aa3cf; font-weight: 400; font-size: 13.300px; padding: 0 17px; }
.btn-save { width: 88px; padding: 0; }
.btn-accept { background: #b7bedd; border: 0; color: #e7eaf3; font-weight: 400; width: 133px; padding: 0; }

.cats { width: 181px; margin-left: 9px; flex: none; display: flex; flex-direction: column; color: #e6eaf0; height: 913px; }
.strip-right { margin-left: 9px; border-radius: 3px 0 0 3px; width: 16px; }
.cats-home { height: 41px; display: flex; align-items: center; font-size: 13px; flex: none; }
.burger { width: 13px; height: 10px; border-top: 2px solid #fff; border-bottom: 2px solid #fff; position: relative; margin-right: 10px; }
.burger::after { content: ""; position: absolute; left: 0; right: 0; top: 2px; height: 2px; background: #fff; }
.cats-list { display: flex; flex-direction: column; gap: 8px; overflow: hidden; flex: 1; margin-top: 8px; }
.cat { height: 37px; flex: none; border: 1px solid #6d7d99; border-radius: 3px; padding: 0 7px; font-size: 13.300px; display: flex; flex-direction: column; justify-content: center; white-space: nowrap; }
.cat small { font-size: 11.300px; color: #c5cbd6; margin-top: 4px; }
.cat-big { height: 56px; }
.cats-thumb { width: 4px; height: 46px; background: #bdc5d2; margin-left: 6px; margin-top: 48px; flex: none; }
.cart-tab { width: 38px; margin-left: 6px; background: #4454b0; margin-bottom: 9px; display: flex; align-items: center; justify-content: center; color: #fff; flex: none; border-radius: 3px 0 0 3px; }
.cart-icon { width: 18px; height: 12px; }

.modal { position: absolute; left: 500px; top: 248px; width: 920px; height: 537px; background: #fff; border-radius: 0 0 4px 4px; display: flex; flex-direction: column; }
.modal-head { height: 46px; border-bottom: 1px solid #dcdfe4; display: flex; justify-content: flex-end; align-items: center; padding-right: 13px; flex: none; }
.modal-x { width: 14px; height: 14px; color: #78818e; }
.modal-hero { height: 209px; border-bottom: 1px solid #d5d8de; padding: 76px 0 0 320px; display: flex; gap: 18px; flex: none; }
.hero-check { width: 28px; height: 28px; margin-top: 1px; flex: none; }
.hero-text h1 { margin: 0; font-size: 20.500px; font-weight: 500; line-height: 30px; }
.hero-text p { margin: 4px 0 0 -2px; font-size: 17.700px; line-height: 26px; color: #33465f; }
.hero-text b { font-weight: 600; font-size: 20px; color: #19325a; margin-left: 6px; }
.modal-docs { height: 213px; border-bottom: 1px solid #c2c7cf; padding: 22px 0 0 20px; flex: none; }
.docs-title { font-size: 13.200px; font-weight: 500; line-height: 20px; }
.docs-grid { display: grid; grid-template-columns: repeat(6, 120px); grid-template-rows: 100px 36px; gap: 8px; margin: 7px 0 0 60px; }
.doc { background: #f3f4fa; border-radius: 4px; display: flex; flex-direction: column; align-items: center; color: #5765b8; font-size: 13px; padding-top: 21px; line-height: 18px; white-space: nowrap; }
.printer { width: 30px; height: 27px; color: #4454b0; display: block; margin-bottom: 12px; }
.doc-on { background: linear-gradient(135deg, #4253ae 45%, #5f6fcb 100%); color: #f0f2fa; }
.doc-on .printer { color: #fff; }
.printer-wrap { position: relative; display: block; }
.doc-check { position: absolute; left: 25px; top: -6px; width: 14px; height: 14px; border-radius: 50%; background: #fff; color: #4454b0; }
.doc-check svg { width: 14px; height: 14px; display: block; fill: none; }
.email { background: #f3f4fa; border-radius: 4px; display: flex; align-items: center; justify-content: center; gap: 6px; color: #4454b0; font-size: 11.500px; }
.radio { width: 14px; height: 14px; border: 1.500px solid #5262b8; border-radius: 50%; display: block; }
.modal-foot { flex: 1; display: flex; align-items: flex-start; padding: 17px 20px 0; }
.copies-label { font-size: 13px; line-height: 36px; color: #33465f; }
.step { width: 24px; height: 24px; margin: 6px 0 0 7px; border: 1px solid #4454b0; border-radius: 3px; background: #fff; color: #4454b0; font-size: 24px; line-height: 1; padding: 0; display: flex; align-items: center; justify-content: center; }
.copies { width: 120px; height: 32px; margin: 2px 0 0 8px; border: 1px solid #bac0ca; border-radius: 3px; text-align: center; line-height: 32px; font-weight: 500; }
.step-plus { background: #4454b0; color: #fff; margin-left: 8px; }
.foot-btn { width: 88px; height: 36px; border: 1px solid #4454b0; border-radius: 4px; background: #fff; color: #4454b0; font-size: 13px; font-weight: 500; margin-left: 8px; }
.foot-print { background: linear-gradient(100deg, #4454b0 55%, #5f6fcb 100%); color: #f4f5fb; border: 0; }
.annotation { position: absolute; left: 0; top: 0; width: 1919px; height: 1033px; pointer-events: none; }
```
